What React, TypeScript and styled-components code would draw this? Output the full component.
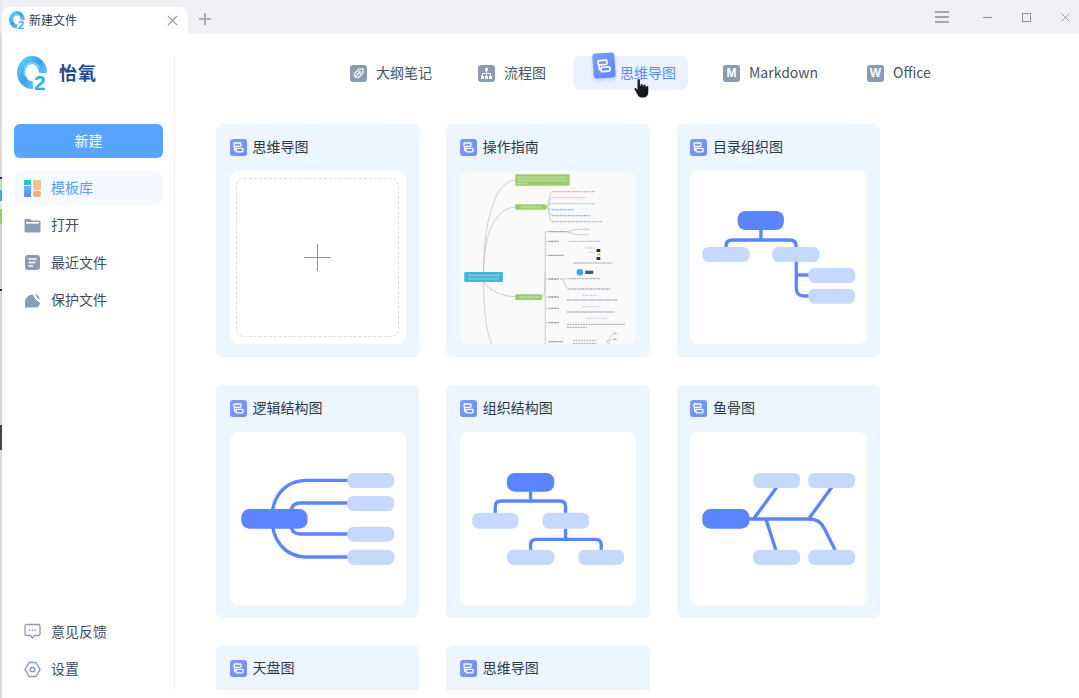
import React from "react";
import styled, {createGlobalStyle} from "styled-components";

const GlobalStyle = createGlobalStyle`
  html, body {
    margin: 0;
    height: 100%;
    overflow: hidden;
    background: #fff;
  }
  * {
    box-sizing: border-box;
  }
  #root {
    height: 100%;
    font-family: "Noto Sans CJK SC", "Noto Sans", sans-serif;
  }
`

const Page = styled.div`
  display: flex;
  height: 698px;
`

// a sliver of the desktop shows left of the window
const DesktopEdge = styled.div`
  width: 2px;
  flex-shrink: 0;
  background: linear-gradient(
    to bottom,
    #e9e8ed 0, #e9e8ed 34px, #dcdcdc 34px, #dcdcdc 177px, #1c2a5e 177px, #1c2a5e 179px,
    #c9d6c0 179px, #c9d6c0 190px, #2fb6cf 190px, #2fb6cf 201px, #dfe5ea 201px, #dfe5ea 209px,
    #9ccb6b 209px, #9ccb6b 224px, #cfd2d4 224px, #cfd2d4 289px, #1c2a5e 289px, #1c2a5e 291px,
    #d6d6d6 291px, #d6d6d6 425px, #444 425px, #444 450px, #dcdcdc 450px
  );
`

const Shell = styled.div`
  flex: 1;
  min-width: 0;
  display: flex;
  flex-direction: column;
`

const TitleBar = styled.div`
  height: 34px;
  flex-shrink: 0;
  display: flex;
  align-items: flex-end;
  background: #f0eff4;
  padding-right: 9px;
`

const DocTab = styled.div`
  width: 186px;
  height: 27px;
  display: flex;
  align-items: center;
  padding: 0 10px 0 7px;
  background: #fff;
  border-radius: 8px 8px 0 0;
`

const DocTabTitle = styled.span`
  flex: 1;
  margin: 0 0 2px 4px;
  font-size: 12px;
  color: #333c48;
`

const NewTabButton = styled.div`
  margin: 0 0 9px 11px;
  height: 12px;
  display: flex;
`

const WindowControls = styled.div`
  margin-left: auto;
  height: 34px;
  display: flex;
  align-items: center;
  gap: 30px;
`

const MenuButton = styled.div`
  display: flex;
  margin-right: 4px;
`

const Body = styled.div`
  flex: 1;
  min-height: 0;
  display: flex;
`

const Sidebar = styled.aside`
  width: 173px;
  flex-shrink: 0;
  margin: 22px 0 8px;
  padding: 0 11px 4px 12px;
  display: flex;
  flex-direction: column;
  border-right: 1px solid #edeff2;
`

const Brand = styled.div`
  height: 34px;
  display: flex;
  align-items: flex-start;
  padding-left: 3px;
  gap: 12px;
`

const BrandName = styled.span`
  margin-top: 3px;
  font-size: 18px;
  font-weight: 700;
  letter-spacing: 1px;
  color: #1f4a8f;
`

const LogoMark = styled.svg<{$scale: number}>`
  flex-shrink: 0;
  display: block;
  width: ${props => 30 * props.$scale}px;
  height: ${props => 40 * props.$scale}px;
  margin-bottom: ${props => -6 * props.$scale}px;
`

const NewButton = styled.button`
  height: 34px;
  margin-top: 34px;
  padding: 0 0 2px;
  border: 0;
  border-radius: 6px;
  background: #57a5ff;
  color: #fff;
  font: inherit;
  font-size: 14px;
`

const NavList = styled.nav<{$bottom?: boolean}>`
  display: flex;
  flex-direction: column;
  gap: 3.4px;
  margin-top: ${props => (props.$bottom ? "auto" : "13px")};
`

const NavItem = styled.div<{$active?: boolean}>`
  height: 34px;
  display: flex;
  align-items: center;
  gap: 10px;
  padding-left: 10px;
  border-radius: 8px;
  font-size: 14px;
  background: ${props => (props.$active ? "#f4f8ff" : "transparent")};
  color: ${props => (props.$active ? "#5b9dff" : "#3f4c5e")};
`

const NavLabel = styled.span`
  margin-bottom: 2px;
`

const Main = styled.main`
  flex: 1;
  min-width: 0;
  margin-bottom: 8px;
  overflow: hidden;
  position: relative;
`

const TypeTabs = styled.div`
  height: 34px;
  margin-top: 22px;
  padding-left: 156px;
  display: flex;
  gap: 13px;
`

const TypeTab = styled.div<{$after?: number}>`
  height: 34px;
  display: flex;
  align-items: center;
  gap: 9px;
  padding: 0 14px 0 19px;
  margin-right: ${props => props.$after ?? 0}px;
  font-size: 14px;
  color: #465365;
`

const ActiveTypeTab = styled(TypeTab)`
  gap: 5px;
  padding: 0 12px 0 20px;
  border-radius: 8px;
  background: #ebf1fe;
  color: #5b8cff;
`

const TabLabel = styled.span`
  margin-bottom: 2px;
`

const TabBadge = styled.span`
  width: 17px;
  height: 17px;
  flex-shrink: 0;
  display: flex;
  align-items: center;
  justify-content: center;
  border-radius: 3px;
  background: #8a9bb3;
  color: #fff;
  font-family: "Liberation Sans", sans-serif;
  font-size: 12px;
  font-weight: 700;
`

const ActiveBadge = styled.span`
  width: 22px;
  height: 25px;
  flex-shrink: 0;
  display: flex;
  align-items: center;
  justify-content: center;
  border-radius: 3px;
  background: linear-gradient(135deg, #7d9cff, #5f86f5);
  box-shadow: 0 2px 3px rgba(91, 133, 255, 0.3);
  transform: translateY(-8px) rotate(-4deg);
`

const Cursor = styled.div`
  position: absolute;
  left: 459px;
  top: 45px;
  width: 16px;
  height: 19px;
`

const CardGrid = styled.div`
  margin: 34px 0 0 41px;
  display: grid;
  grid-template-columns: repeat(3, 203.4px);
  grid-auto-rows: 233px;
  column-gap: 26.9px;
  row-gap: 27.6px;
`

const Card = styled.section`
  padding: 15px 13.4px 13px 13.5px;
  border-radius: 6px;
  background: #edf6fe;
`

const CardHeader = styled.header`
  height: 17px;
  display: flex;
  align-items: center;
  gap: 6px;
  margin-bottom: 15px;
  font-size: 14px;
  color: #2d3746;
`

const CardTitle = styled.span`
  margin-bottom: 3px;
`

const CardBadge = styled.span`
  width: 17px;
  height: 17px;
  flex-shrink: 0;
  display: flex;
  align-items: center;
  justify-content: center;
  border-radius: 3px;
  background: linear-gradient(135deg, #7f9bff, #6d8dfb);
`

const Preview = styled.div<{$tint?: boolean}>`
  height: 173px;
  display: flex;
  border-radius: 8px;
  overflow: hidden;
  background: ${props => (props.$tint ? "#fafafa" : "#fff")};
`

const Diagram = styled.svg`
  display: block;
  width: 100%;
  height: 100%;
`

const BlankFrame = styled.div`
  flex: 1;
  margin: 7px 7px 7px 6px;
  border: 1px dashed #dcdcdc;
  border-radius: 8px;
  display: flex;
  align-items: center;
  justify-content: center;
`

const FuzzyLabels = styled.g`
  filter: blur(0.3px);
`

const BLUE = "#5b85ff"
const PALE = "#c5d9fd"

const Logo = ({scale}: {scale: number}) => (
  <LogoMark $scale={scale} viewBox="0 0 30 40">
    <defs>
      <linearGradient id="ring" x1="0" y1="0" x2="1" y2="1">
        <stop offset="0" stopColor="#5ccdf6"/>
        <stop offset="0.45" stopColor="#3b9ff0"/>
        <stop offset="1" stopColor="#74d3f7"/>
      </linearGradient>
    </defs>
    <path d="M26 17 A11 12.5 0 1 0 16 29" fill="none" stroke="url(#ring)" strokeWidth="8"/>
    <path d="M22.5 12 A8 9.5 0 0 0 8 20" fill="none" stroke="#9fe3fb" strokeWidth="2" opacity="0.6"/>
    <text x="17" y="34" fontFamily="Liberation Sans, sans-serif" fontSize="21" fontWeight="700" fill="#27b4ee">2</text>
  </LogoMark>
)

const MindGlyph = ({size = 11}: {size?: number}) => (
  <svg width={size} height={size} viewBox="0 0 11 11" fill="none" stroke="#fff" strokeWidth="1.3">
    <rect x="1" y="1" width="7" height="3.4" rx="0.8"/>
    <rect x="3" y="6.4" width="7" height="3.4" rx="0.8"/>
    <path d="M1.6 4.4 V8 H3"/>
  </svg>
)

const PenGlyph = () => (
  <svg width="13" height="13" viewBox="0 0 13 13" fill="none" stroke="#fff" strokeWidth="1.2">
    <path d="M3 10 L2.5 6.5 L7 2 H11 V6 L6.5 10.5 Z"/>
    <path d="M3 10 L7 6"/>
    <circle cx="7.6" cy="5.4" r="0.8"/>
  </svg>
)

const FlowGlyph = () => (
  <svg width="13" height="13" viewBox="0 0 13 13" fill="#fff">
    <rect x="5" y="1" width="3" height="3"/>
    <rect x="1" y="9" width="3" height="3"/>
    <rect x="5" y="9" width="3" height="3"/>
    <rect x="9" y="9" width="3" height="3"/>
    <path d="M6 4h1v2h4v3h-1V7H7v2H6V7H3v2H2V6h4z"/>
  </svg>
)

const TemplateIcon = () => (
  <svg width="17" height="17" viewBox="0 0 17 17">
    <defs>
      <linearGradient id="tplBlue" x1="0" y1="0" x2="0" y2="1">
        <stop offset="0" stopColor="#6bb4ff"/>
        <stop offset="1" stopColor="#5b85ff"/>
      </linearGradient>
    </defs>
    <path d="M0 1a1 1 0 0 1 1-1h6v5H0z" fill="#27c0d6"/>
    <path d="M0 6h7v11H1a1 1 0 0 1-1-1z" fill="url(#tplBlue)"/>
    <path d="M9 0h7a1 1 0 0 1 1 1v9H9z" fill="#f3c088"/>
    <rect x="9" y="11" width="8" height="6" rx="2" fill="#eeb07a"/>
  </svg>
)

const FolderIcon = () => (
  <svg width="17" height="17" viewBox="0 0 17 17">
    <path d="M1 2h5l1.5 1.5H15a1.5 1.5 0 0 1 1.5 1.5v9a1.5 1.5 0 0 1-1.5 1.5H2A1.5 1.5 0 0 1 .5 14V2.5z" fill="#8a9bb3"/>
    <rect x="2" y="5" width="13" height="1.6" fill="#fff"/>
  </svg>
)

const DocIcon = () => (
  <svg width="17" height="17" viewBox="0 0 17 17">
    <rect x="1" y="1" width="15" height="15" rx="3" fill="#8a9bb3"/>
    <path d="M4.5 5h8M4.5 8.5h7M4.5 12h4.5" stroke="#fff" strokeWidth="1.3"/>
  </svg>
)

const ShieldIcon = () => (
  <svg width="17" height="17" viewBox="0 0 17 17">
    <path d="M1 15.5 V10.5 C1 6 4.5 2.5 9 2.5 C10 6 12.5 9 16 10.5 C16 13 14.5 15 13 15.5 Z" fill="#8a9bb3"/>
    <path d="M11 1.5 C13 2 15 4.5 16 8 C13.5 6.5 12 4 11 1.5 Z" fill="#8a9bb3"/>
  </svg>
)

const ChatIcon = () => (
  <svg width="17" height="17" viewBox="0 0 17 17" fill="none">
    <path d="M2.5 1.5h12a1.5 1.5 0 0 1 1.5 1.5v8a1.5 1.5 0 0 1-1.5 1.5H10.5L8.5 15 6.5 12.5h-4A1.5 1.5 0 0 1 1 11V3a1.5 1.5 0 0 1 1.5-1.5z" stroke="#8a9bb3" strokeWidth="1.3"/>
    <path d="M5 7h1.4M7.8 7h1.4M10.6 7H12" stroke="#8a9bb3" strokeWidth="1.6"/>
  </svg>
)

const GearIcon = () => (
  <svg width="17" height="17" viewBox="0 0 17 17" fill="none" stroke="#8a9bb3">
    <path d="M5 1.5h7L16 8.5l-4 7H5l-4-7z" strokeWidth="1.5" strokeLinejoin="round"/>
    <circle cx="8.5" cy="8.5" r="2.3" strokeWidth="1.5"/>
  </svg>
)

const HandCursor = () => (
  <svg width="16" height="19" viewBox="0 0 16 19">
    <path
      d="M3.5 1.2a1.2 1.2 0 0 1 2.4 0V7l.7.1V6a1.1 1.1 0 0 1 2.2 0v1.3l.6.1V6.7a1.1 1.1 0 0 1 2.2 0v1.2l.5.1a1.1 1.1 0 0 1 2.2.2V13c0 3-1.6 5.5-4.5 5.5H7.5c-2 0-3-1.1-3.8-2.5L.6 10.6c-.6-1 .8-2.1 1.6-1.2l1.3 1.4z"
      fill="#14181f"
    />
  </svg>
)

type Pill = [number, number, number, number]

const Pills = ({items, fill}: {items: Pill[]; fill: string}) => (
  <>
    {items.map(([x1, y1, x2, y2]) => (
      <rect key={`${x1}-${y1}`} x={x1} y={y1} width={x2 - x1} height={y2 - y1} rx={(y2 - y1) * 0.42} fill={fill}/>
    ))}
  </>
)

const Wires = ({d}: {d: string}) => (
  <path d={d} fill="none" stroke={BLUE} strokeWidth="10"/>
)

const TreeDiagram = () => (
  <Diagram viewBox="30 138 528 519">
    <Wires d="M242 315V345M137 368V365Q137 345 157 345H328Q348 345 348 365V490Q348 513 372 513H390M348 450H390"/>
    <Pills fill={BLUE} items={[[172, 258, 311, 315]]}/>
    <Pills fill={PALE} items={[[66, 366, 208, 411], [276, 366, 418, 411], [384, 429, 525, 474], [384, 491, 525, 536]]}/>
  </Diagram>
)

const LogicDiagram = () => (
  <Diagram viewBox="45 141 528 519">
    <Wires d="M400 286H275C205 286 170 340 170 400C170 460 205 516 275 516H400M400 354H255Q230 354 226 380M400 447H255Q230 447 228 425"/>
    <Pills fill={BLUE} items={[[78, 372, 277, 431]]}/>
    <Pills fill={PALE} items={[[396, 264, 537, 309], [396, 333, 537, 378], [396, 425, 537, 470], [396, 494, 537, 540]]}/>
  </Diagram>
)

const OrgDiagram = () => (
  <Diagram viewBox="30 141 528 519">
    <Wires d="M241 320V348M135 385V365Q135 348 152 348H328Q346 348 346 365V385M346 431V463M241 497V480Q241 463 258 463H436Q453 463 453 480V497"/>
    <Pills fill={BLUE} items={[[170, 264, 312, 320]]}/>
    <Pills fill={PALE} items={[[66, 383, 205, 431], [276, 383, 417, 431], [170, 494, 312, 540], [384, 494, 522, 540]]}/>
  </Diagram>
)

const FishDiagram = () => (
  <Diagram viewBox="30 141 528 519">
    <Wires d="M205 402H385Q420 402 432 430L465 496M220 402L290 306M385 402L455 306M257 402L287 496"/>
    <Pills fill={BLUE} items={[[66, 372, 208, 431]]}/>
    <Pills fill={PALE} items={[[219, 264, 360, 309], [384, 264, 525, 309], [219, 494, 360, 540], [384, 494, 525, 540]]}/>
  </Diagram>
)

// thumbnail of a real map: labels are far too small to read, so they are just bars
const mapBars: [number, number, number, string][] = [
  [305, 435, 200, "#f2b36d"], [305, 405, 218, "#f3cf8a"], [305, 435, 236, "#b7dba0"],
  [305, 372, 254, "#7cc3f0"], [305, 420, 272, "#7cc3f0"], [305, 455, 290, "#b9bfc6"],
  [295, 348, 320, "#8f97a3"], [378, 418, 313, "#c4c8ce"], [378, 415, 329, "#c4c8ce"],
  [295, 325, 349, "#8f97a3"], [355, 450, 349, "#c4c8ce"], [295, 340, 391, "#8f97a3"],
  [405, 435, 369, "#d5d8dc"], [415, 435, 382, "#d5d8dc"], [370, 485, 414, "#b9bfc6"],
  [295, 325, 462, "#8f97a3"], [355, 448, 461, "#aeb4bc"], [355, 480, 492, "#aeb4bc"],
  [295, 325, 516, "#8f97a3"], [350, 502, 525, "#aeb4bc"], [295, 325, 550, "#8f97a3"],
  [350, 490, 561, "#aeb4bc"], [295, 325, 593, "#8f97a3"], [350, 525, 598, "#aeb4bc"],
  [350, 410, 607, "#aeb4bc"], [295, 338, 650, "#8f97a3"], [368, 440, 646, "#b9bfc6"],
  [368, 440, 655, "#b9bfc6"], [490, 500, 625, "#9aa1ab"], [490, 500, 643, "#9aa1ab"],
  [410, 470, 580, "#c6d4f5"], [395, 440, 511, "#c6d4f5"], [395, 445, 545, "#c6d4f5"],
]

const MindMapThumb = () => (
  <Diagram viewBox="30 138 528 519">
    <g fill="none" stroke="#b6babf" strokeWidth="2">
      <path d="M100 441C100 300 130 170 195 165M100 441C100 340 130 250 195 246M100 471C110 490 150 515 195 515M100 471C100 560 110 630 125 657"/>
      <path d="M288 246C298 246 296 200 305 200M288 246C298 246 298 218 305 218M288 246L305 236M288 246L305 254M288 246C298 246 298 272 305 272M288 246C298 246 296 290 305 290"/>
      <path d="M275 515C285 515 283 480 285 440V320H293M285 349H293M285 391H293M285 462H293M285 516H293M285 550H293M285 593H293M285 657V440"/>
      <path d="M350 320L378 313M350 320L378 329M330 462C345 462 345 461 355 461M330 462C345 462 345 492 355 492M470 650L490 625M470 650L490 643M470 650L480 657"/>
    </g>
    <rect x="195" y="148" width="163" height="34" rx="3" fill="#9ccb6b"/>
    <rect x="195" y="238" width="93" height="16" rx="3" fill="#9ccb6b"/>
    <rect x="195" y="508" width="80" height="17" rx="3" fill="#9ccb6b"/>
    <rect x="42" y="441" width="116" height="30" rx="3" fill="#3fb5d8"/>
    <FuzzyLabels>
      <g stroke="#fff" strokeWidth="3" opacity="0.7" strokeDasharray="6 2">
        <path d="M202 157H350M202 166H350M202 175H232M212 246H275M208 516H268M55 451H148M55 462H145"/>
      </g>
      {mapBars.map(([x1, x2, y, color]) => (
        <line key={`${x1}-${y}`} x1={x1} x2={x2} y1={y} y2={y} stroke={color} strokeWidth="4" strokeDasharray="6 2"/>
      ))}
    </FuzzyLabels>
    <circle cx="389" cy="442" r="10" fill="#3ba7ee"/>
    <rect x="405" y="437" width="24" height="10" fill="#3a5a96"/>
    <rect x="439" y="372" width="11" height="9" fill="#22262c"/>
    <rect x="441" y="385" width="9" height="6" fill="#e3b35a"/>
    <rect x="439" y="396" width="11" height="9" fill="#33383f"/>
  </Diagram>
)

const BlankPreview = () => (
  <Preview>
    <BlankFrame>
      <svg width="27" height="27" viewBox="0 0 27 27">
        <path d="M13.5 0V27M0 13.5H27" stroke="#8a9699" strokeWidth="1"/>
      </svg>
    </BlankFrame>
  </Preview>
)

const templates = [
  {title: "思维导图", preview: <BlankPreview/>},
  {title: "操作指南", preview: <Preview $tint><MindMapThumb/></Preview>},
  {title: "目录组织图", preview: <Preview><TreeDiagram/></Preview>},
  {title: "逻辑结构图", preview: <Preview><LogicDiagram/></Preview>},
  {title: "组织结构图", preview: <Preview><OrgDiagram/></Preview>},
  {title: "鱼骨图", preview: <Preview><FishDiagram/></Preview>},
  {title: "天盘图", preview: <Preview/>},
  {title: "思维导图", preview: <Preview/>},
]

export default function App() {
  return (
    <Page>
      <GlobalStyle/>
      <DesktopEdge/>
      <Shell>
        <TitleBar>
          <DocTab>
            <Logo scale={0.53}/>
            <DocTabTitle>新建文件</DocTabTitle>
            <svg width="11" height="11" viewBox="0 0 11 11">
              <path d="M1 1L10 10M10 1L1 10" stroke="#9a9ca3" strokeWidth="1.2"/>
            </svg>
          </DocTab>
          <NewTabButton>
            <svg width="12" height="12" viewBox="0 0 12 12">
              <path d="M6 0V12M0 6H12" stroke="#9a9ca3" strokeWidth="1.6"/>
            </svg>
          </NewTabButton>
          <WindowControls>
            <MenuButton>
              <svg width="14" height="12" viewBox="0 0 14 12">
                <path d="M0 1H14M0 6H14M0 11H14" stroke="#a3a6af" strokeWidth="2"/>
              </svg>
            </MenuButton>
            <svg width="9" height="9" viewBox="0 0 9 9">
              <path d="M0 4.5H9" stroke="#8e9096" strokeWidth="1"/>
            </svg>
            <svg width="9" height="9" viewBox="0 0 9 9">
              <rect x="0.5" y="0.5" width="8" height="8" fill="none" stroke="#8e9096"/>
            </svg>
            <svg width="9" height="9" viewBox="0 0 9 9">
              <path d="M0.5 0.5L8.5 8.5M8.5 0.5L0.5 8.5" stroke="#8e9096" strokeWidth="0.8"/>
            </svg>
          </WindowControls>
        </TitleBar>
        <Body>
          <Sidebar>
            <Brand>
              <Logo scale={1}/>
              <BrandName>怡氧</BrandName>
            </Brand>
            <NewButton>新建</NewButton>
            <NavList>
              <NavItem $active><TemplateIcon/><NavLabel>模板库</NavLabel></NavItem>
              <NavItem><FolderIcon/><NavLabel>打开</NavLabel></NavItem>
              <NavItem><DocIcon/><NavLabel>最近文件</NavLabel></NavItem>
              <NavItem><ShieldIcon/><NavLabel>保护文件</NavLabel></NavItem>
            </NavList>
            <NavList $bottom>
              <NavItem><ChatIcon/><NavLabel>意见反馈</NavLabel></NavItem>
              <NavItem><GearIcon/><NavLabel>设置</NavLabel></NavItem>
            </NavList>
          </Sidebar>
          <Main>
            <TypeTabs>
              <TypeTab><TabBadge><PenGlyph/></TabBadge><TabLabel>大纲笔记</TabLabel></TypeTab>
              <TypeTab><TabBadge><FlowGlyph/></TabBadge><TabLabel>流程图</TabLabel></TypeTab>
              <ActiveTypeTab $after={3}><ActiveBadge><MindGlyph size={14}/></ActiveBadge><TabLabel>思维导图</TabLabel></ActiveTypeTab>
              <TypeTab $after={3}><TabBadge>M</TabBadge><TabLabel>Markdown</TabLabel></TypeTab>
              <TypeTab><TabBadge>W</TabBadge><TabLabel>Office</TabLabel></TypeTab>
            </TypeTabs>
            <CardGrid>
              {templates.map((item, index) => (
                <Card key={index}>
                  <CardHeader>
                    <CardBadge><MindGlyph/></CardBadge>
                    <CardTitle>{item.title}</CardTitle>
                  </CardHeader>
                  {item.preview}
                </Card>
              ))}
            </CardGrid>
            <Cursor><HandCursor/></Cursor>
          </Main>
        </Body>
      </Shell>
    </Page>
  )
}
